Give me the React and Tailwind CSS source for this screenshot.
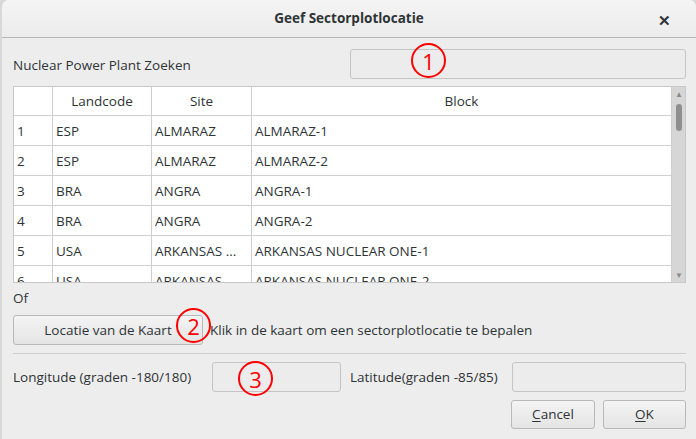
const ROWS = [
  ['1', 'ESP', 'ALMARAZ', 'ALMARAZ-1'],
  ['2', 'ESP', 'ALMARAZ', 'ALMARAZ-2'],
  ['3', 'BRA', 'ANGRA', 'ANGRA-1'],
  ['4', 'BRA', 'ANGRA', 'ANGRA-2'],
  ['5', 'USA', 'ARKANSAS ...', 'ARKANSAS NUCLEAR ONE-1'],
  ['6', 'USA', 'ARKANSAS ...', 'ARKANSAS NUCLEAR ONE-2'],
];

function Marker({ n }) {
  return (
    <span className="absolute flex h-[35px] w-[35px] items-center justify-center rounded-full border-[2.5px] border-[#ff0000] text-[22px] leading-none text-[#ff0000]">
      {n}
    </span>
  );
}

function Field({ className, marker, markerClass }) {
  return (
    <div className={`relative h-[30px] rounded-[3px] border border-[#c4c4c4] bg-[#ececec] ${className}`}>
      {marker && (
        <div className={`absolute ${markerClass}`}>
          <Marker n={marker} />
        </div>
      )}
    </div>
  );
}

export default function App() {
  return (
    <div
      className="h-[439px] w-[696px] overflow-hidden bg-[#d8d8d8] pl-[2px] text-[13.5px] text-[#2e3436]"
      style={{ fontFamily: '"Open Sans", "Noto Sans", sans-serif' }}
    >
      <div className="h-full w-full rounded-t-[7px] bg-[#ededed]">
        <header className="relative flex h-[38px] items-center justify-center rounded-t-[7px] border-b border-[#b6b6b3] bg-gradient-to-b from-[#f4f4f4] to-[#ececec]">
          <span className="text-[13.5px] font-bold text-[#2e3436]">Geef Sectorplotlocatie</span>
          <span className="absolute right-[25px] top-[9px] text-[15px] font-bold text-[#2e3436]">✕</span>
        </header>

        <div className="px-[11px] pr-[10px]">
          <div className="flex h-[48px] items-center justify-between pt-[4px]">
            <span className="pt-[3px]">Nuclear Power Plant Zoeken</span>
            <Field className="w-[336px]" marker="1" markerClass="left-[60px] top-[-7px]" />
          </div>

          <div className="flex h-[197px] border border-[#c8c8c8] bg-white">
            <div className="flex-1 overflow-hidden">
              <div className="grid h-[29px] grid-cols-[39px_99px_100px_1fr] border-b border-[#cfcfcf]">
                <div className="border-r border-[#cfcfcf]" />
                <div className="flex items-center justify-center border-r border-[#cfcfcf]">Landcode</div>
                <div className="flex items-center justify-center border-r border-[#cfcfcf]">Site</div>
                <div className="flex items-center justify-center">Block</div>
              </div>
              {ROWS.map((r) => (
                <div key={r[0]} className="grid h-[30px] grid-cols-[39px_99px_100px_1fr] border-b border-[#cfcfcf]">
                  {r.map((c, i) => (
                    <div
                      key={i}
                      className={`flex items-center overflow-hidden whitespace-nowrap pl-[3px] pt-[2px] ${i < 3 ? 'border-r border-[#cfcfcf]' : ''}`}
                    >
                      {c}
                    </div>
                  ))}
                </div>
              ))}
            </div>
            <div className="relative w-[14px] border-l border-[#cfcfcf] bg-[#d6d6d6]">
              <span className="absolute left-[3px] top-[3px] text-[8px] leading-none text-[#8a8a8a]">▲</span>
              <div className="absolute left-[4px] top-[17px] h-[27px] w-[6px] rounded-full bg-[#8f8f8f]" />
              <span className="absolute bottom-[3px] left-[3px] text-[8px] leading-none text-[#8a8a8a]">▼</span>
            </div>
          </div>

          <div className="pt-[6px] leading-[18px]">Of</div>

          <div className="mt-[8px] flex items-center">
            <div className="relative flex h-[30px] w-[190px] items-center justify-center rounded-[3px] border border-[#b8b8b8] bg-gradient-to-b from-[#f4f4f4] to-[#e4e4e4]">
              Locatie van de Kaart
              <div className="absolute left-[162px] top-[-8px]">
                <Marker n="2" />
              </div>
            </div>
            <span className="ml-[7px]">Klik in de kaart om een sectorplotlocatie te bepalen</span>
          </div>

          <div className="mt-[8px] border-t border-[#cdcdcd]" />

          <div className="mt-[8px] flex items-center">
            <span className="w-[199px] whitespace-nowrap">Longitude (graden -180/180)</span>
            <Field className="w-[129px]" marker="3" markerClass="left-[25px] top-[-2px]" />
            <span className="ml-[9px] flex-1 whitespace-nowrap">Latitude(graden -85/85)</span>
            <Field className="w-[174px]" />
          </div>

          <div className="mt-[8px] flex justify-end gap-[8px]">
            <button className="h-[29px] w-[84px] rounded-[3px] border border-[#b8b8b8] bg-gradient-to-b from-[#f4f4f4] to-[#e4e4e4]">
              <span className="underline decoration-1 underline-offset-2">C</span>ancel
            </button>
            <button className="h-[29px] w-[83px] rounded-[3px] border border-[#b8b8b8] bg-gradient-to-b from-[#f4f4f4] to-[#e4e4e4]">
              <span className="underline decoration-1 underline-offset-2">O</span>K
            </button>
          </div>
        </div>
      </div>
    </div>
  );
}
